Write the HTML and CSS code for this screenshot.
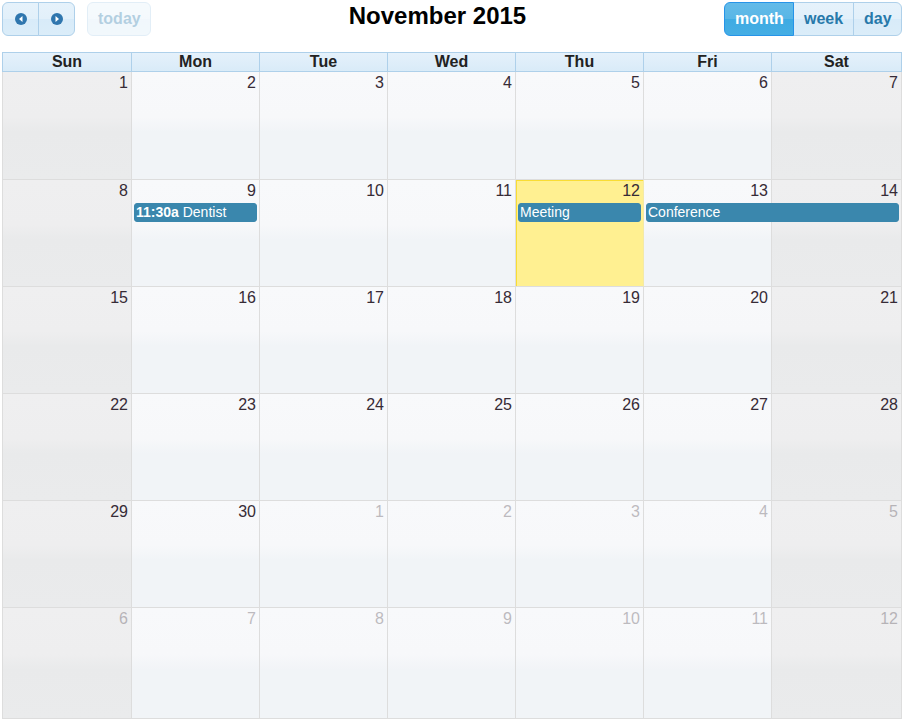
FILE: index.html
```html
<!DOCTYPE html>
<html>
<head>
<meta charset="utf-8">
<link rel="stylesheet" href="styles.css">
</head>
<body>
<div class="cal">
  <div class="toolbar">
    <div class="tb-left">
      <div class="btn-group">
        <button class="btn icon-btn corner-l" aria-label="prev">
          <svg width="16" height="16" viewBox="0 0 16 16"><circle cx="8" cy="8" r="6" fill="#2f76ae"/><path d="M9.5 5 L6 8 L9.5 11 Z" fill="#fff"/></svg>
        </button>
        <button class="btn icon-btn corner-r" aria-label="next">
          <svg width="16" height="16" viewBox="0 0 16 16"><circle cx="8" cy="8" r="6" fill="#2f76ae"/><path d="M6.5 5 L10 8 L6.5 11 Z" fill="#fff"/></svg>
        </button>
      </div>
      <button class="btn corner-all disabled">today</button>
    </div>
    <div class="tb-center"><h2 class="title">November 2015</h2></div>
    <div class="tb-right">
      <div class="btn-group">
        <button class="btn active corner-l">month</button>
        <button class="btn">week</button>
        <button class="btn corner-r">day</button>
      </div>
    </div>
  </div>

  <div class="grid">
    <div class="head">
      <div class="th">Sun</div><div class="th">Mon</div><div class="th">Tue</div><div class="th">Wed</div><div class="th">Thu</div><div class="th">Fri</div><div class="th">Sat</div>
    </div>

    <div class="week first">
      <div class="bg c1 wkend"></div><div class="bg c2"></div><div class="bg c3"></div><div class="bg c4"></div><div class="bg c5"></div><div class="bg c6"></div><div class="bg c7 wkend"></div>
      <div class="num c1">1</div><div class="num c2">2</div><div class="num c3">3</div><div class="num c4">4</div><div class="num c5">5</div><div class="num c6">6</div><div class="num c7">7</div>
    </div>

    <div class="week">
      <div class="bg c1 wkend"></div><div class="bg c2"></div><div class="bg c3"></div><div class="bg c4"></div><div class="bg c5 today"></div><div class="bg c6"></div><div class="bg c7 wkend"></div>
      <div class="num c1">8</div><div class="num c2">9</div><div class="num c3">10</div><div class="num c4">11</div><div class="num c5">12</div><div class="num c6">13</div><div class="num c7">14</div>
      <div class="event c2"><b>11:30a</b> Dentist</div>
      <div class="event c5">Meeting</div>
      <div class="event c6-7">Conference</div>
    </div>

    <div class="week">
      <div class="bg c1 wkend"></div><div class="bg c2"></div><div class="bg c3"></div><div class="bg c4"></div><div class="bg c5"></div><div class="bg c6"></div><div class="bg c7 wkend"></div>
      <div class="num c1">15</div><div class="num c2">16</div><div class="num c3">17</div><div class="num c4">18</div><div class="num c5">19</div><div class="num c6">20</div><div class="num c7">21</div>
    </div>

    <div class="week">
      <div class="bg c1 wkend"></div><div class="bg c2"></div><div class="bg c3"></div><div class="bg c4"></div><div class="bg c5"></div><div class="bg c6"></div><div class="bg c7 wkend"></div>
      <div class="num c1">22</div><div class="num c2">23</div><div class="num c3">24</div><div class="num c4">25</div><div class="num c5">26</div><div class="num c6">27</div><div class="num c7">28</div>
    </div>

    <div class="week">
      <div class="bg c1 wkend"></div><div class="bg c2"></div><div class="bg c3"></div><div class="bg c4"></div><div class="bg c5"></div><div class="bg c6"></div><div class="bg c7 wkend"></div>
      <div class="num c1">29</div><div class="num c2">30</div><div class="num c3 other">1</div><div class="num c4 other">2</div><div class="num c5 other">3</div><div class="num c6 other">4</div><div class="num c7 other">5</div>
    </div>

    <div class="week last">
      <div class="bg c1 wkend"></div><div class="bg c2"></div><div class="bg c3"></div><div class="bg c4"></div><div class="bg c5"></div><div class="bg c6"></div><div class="bg c7 wkend"></div>
      <div class="num c1 other">6</div><div class="num c2 other">7</div><div class="num c3 other">8</div><div class="num c4 other">9</div><div class="num c5 other">10</div><div class="num c6 other">11</div><div class="num c7 other">12</div>
    </div>
  </div>
</div>
</body>
</html>
```

FILE: styles.css
```css
html, body {
  margin: 0;
  padding: 0;
  background: #ffffff;
}
body {
  font-family: "Liberation Sans", Arial, sans-serif;
  color: #362b36;
}
.cal {
  width: 900px;
  padding: 2px;
}
.toolbar {
  display: flex;
  align-items: flex-start;
  height: 34px;
  margin-bottom: 16px;
}
.tb-left {
  display: flex;
  gap: 12px;
}
.tb-center {
  flex: 1;
  text-align: center;
}
.title {
  margin: 0;
  font-size: 24px;
  line-height: 28px;
  font-weight: bold;
  color: #000;
}
.btn-group {
  display: flex;
}
.btn {
  font-family: "Liberation Sans", Arial, sans-serif;
  font-size: 16px;
  font-weight: bold;
  line-height: 18px;
  height: 34px;
  padding: 0 10px;
  margin: 0;
  color: #2779aa;
  border: 1px solid #aed0ea;
  background: linear-gradient(#e6f2fb 0%, #e2f0fa 50%, #d8ebf9 51%, #dbedf9 100%);
  cursor: pointer;
}
.btn-group .btn + .btn {
  margin-left: -1px;
}
.icon-btn {
  width: 37px;
  padding: 0;
  display: flex;
  align-items: center;
  justify-content: center;
}
.corner-l {
  border-radius: 6px 0 0 6px;
}
.corner-r {
  border-radius: 0 6px 6px 0;
}
.corner-all {
  border-radius: 6px;
  width: 64px;
}
.disabled {
  opacity: 0.35;
  cursor: default;
}
.active {
  color: #ffffff;
  border-color: #2694e8;
  background: linear-gradient(#63bbe8 0%, #58b6e6 50%, #3eabe3 51%, #45aee4 100%);
  position: relative;
}
.tb-right .btn:nth-child(1) { width: 70px; }
.tb-right .btn:nth-child(2) { width: 61px; }
.tb-right .btn:nth-child(3) { width: 49px; }

.grid {
  width: 900px;
}
.head,
.week {
  display: grid;
  grid-template-columns: 129px 128px 128px 128px 128px 128px 130px;
}
.head {
  border: 1px solid #aed0ea;
  border-right: none;
  background: linear-gradient(#e5f1fb, #d9ebf8);
}
.th {
  border-right: 1px solid #aed0ea;
  text-align: center;
  font-size: 16px;
  font-weight: bold;
  line-height: 18px;
  color: #222222;
}
.week {
  grid-template-rows: 20px auto 1fr;
  height: 107px;
  border-left: 1px solid #dddddd;
}
.week.first {
  height: 108px;
}
.week.last {
  height: 111px;
}
.bg {
  grid-row: 1 / 4;
  border-right: 1px solid #dddddd;
  border-bottom: 1px solid #dddddd;
  background: linear-gradient(#f8f9fb 0%, #f7f8fa 42%, #f1f4f7 56%, #f1f4f7 100%);
}
.bg.wkend {
  background: linear-gradient(#efeff0 0%, #eeeeef 42%, #e9eaeb 56%, #eaebec 100%);
}
.bg.today {
  background: #fff091;
  box-shadow: inset 1px 1px 0 #f9dd34;
  border-right-color: #f3e9a8;
}
.c1 { grid-column: 1; }
.c2 { grid-column: 2; }
.c3 { grid-column: 3; }
.c4 { grid-column: 4; }
.c5 { grid-column: 5; }
.c6 { grid-column: 6; }
.c7 { grid-column: 7; }
.c6-7 { grid-column: 6 / 8; }
.num {
  grid-row: 1;
  text-align: right;
  font-size: 16px;
  line-height: 19px;
  padding: 1px 4px 0 0;
  color: #362b36;
}
.num.other {
  opacity: 0.3;
}
.event {
  grid-row: 2;
  margin: 3px 3px 0 2px;
  background: #3a87ad;
  border: 1px solid #3a87ad;
  border-radius: 3px;
  color: #ffffff;
  font-size: 14px;
  line-height: 17px;
  padding: 0 1px;
  white-space: nowrap;
  overflow: hidden;
}
.event b {
  font-weight: bold;
}
```
